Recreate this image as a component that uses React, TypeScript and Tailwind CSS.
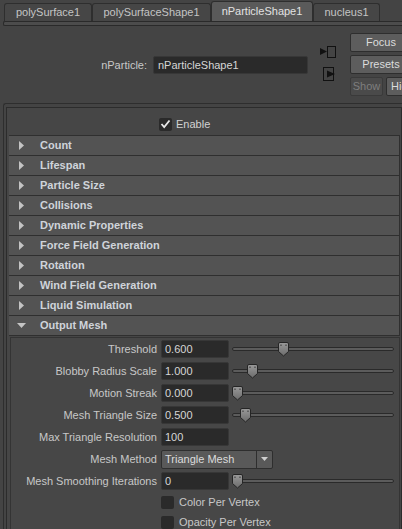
import React from 'react';

const tabs = [
  { label: 'polySurface1', w: 'w-[88px]', active: false },
  { label: 'polySurfaceShape1', w: 'w-[119px]', active: false },
  { label: 'nParticleShape1', w: 'w-[102px]', active: true },
  { label: 'nucleus1', w: 'w-[67px]', active: false },
];

const sections = [
  'Count',
  'Lifespan',
  'Particle Size',
  'Collisions',
  'Dynamic Properties',
  'Force Field Generation',
  'Rotation',
  'Wind Field Generation',
  'Liquid Simulation',
];

const sliderRows = [
  { label: 'Threshold', value: '0.600', pos: 46 },
  { label: 'Blobby Radius Scale', value: '1.000', pos: 15 },
  { label: 'Motion Streak', value: '0.000', pos: 0 },
  { label: 'Mesh Triangle Size', value: '0.500', pos: 8 },
];

function Thumb({ left }: { left: number }) {
  return (
    <svg width="11" height="15" viewBox="0 0 11 15" className="absolute top-0" style={{ left }}>
      <defs>
        <linearGradient id="thumbg" x1="0" y1="0" x2="0" y2="1">
          <stop offset="0" stopColor="#9a9a9a" />
          <stop offset="1" stopColor="#6c6c6c" />
        </linearGradient>
      </defs>
      <path
        d="M2 0.5 H9 Q10.5 0.5 10.5 2 V9.5 L5.5 14 L0.5 9.5 V2 Q0.5 0.5 2 0.5 Z"
        fill="url(#thumbg)"
        stroke="#252525"
      />
      <rect x="2.5" y="2.5" width="1" height="1.5" fill="#333" />
      <rect x="7.5" y="2.5" width="1" height="1.5" fill="#333" />
    </svg>
  );
}

function Slider({ pos }: { pos: number }) {
  return (
    <div className="relative ml-[3px] w-[162px] h-[15px] flex items-center shrink-0">
      <div className="w-full h-[4px] rounded-full border border-[#2a2a2a] bg-[#5c5c5c]" />
      <Thumb left={pos} />
    </div>
  );
}

function Field({ value }: { value: string }) {
  return (
    <div className="w-[68px] h-[18px] shrink-0 flex items-center pl-[3px] rounded-[2px] border border-[#373737] bg-[#2a2a2a] text-[#d6d6d6]">
      {value}
    </div>
  );
}

function Label({ children }: { children: React.ReactNode }) {
  return <div className="w-[150px] pr-[4px] text-right shrink-0">{children}</div>;
}

function Tri({ open }: { open?: boolean }) {
  return open ? (
    <svg width="9" height="6" viewBox="0 0 9 6" className="ml-[8px] mr-[14px]">
      <path d="M0 0 H9 L4.5 5 Z" fill="#c4c4c4" />
    </svg>
  ) : (
    <svg width="6" height="9" viewBox="0 0 6 9" className="ml-[10px] mr-[15px]">
      <path d="M0 0 L5 4.5 L0 9 Z" fill="#c4c4c4" />
    </svg>
  );
}

export default function App() {
  return (
    <div className="w-[402px] h-[529px] overflow-hidden bg-[#444444] text-[11px] leading-none text-[#c8c8c8] font-['Liberation_Sans',Arial,sans-serif] select-none">
      {/* Tabs */}
      <div className="h-[21px] flex items-end pl-[4px]">
        {tabs.map((t) => (
          <div
            key={t.label}
            className={`${t.w} shrink-0 flex items-center justify-center border border-b-0 border-[#2e2e2e] rounded-t-[3px] ${
              t.active ? 'h-[20px] bg-[#5a5a5a] text-[#e2e2e2]' : 'h-[18px] bg-[#464646] text-[#c4c4c4]'
            }`}
          >
            {t.label}
          </div>
        ))}
      </div>
      <div className="ml-[3px] h-[5px] border border-r-0 border-[#2a2a2a] rounded-l-[2px] bg-[#4c4c4c]" />

      {/* Node header */}
      <div className="h-[77px] flex items-start pt-[7px] overflow-hidden">
        <div className="w-[310px] shrink-0 flex items-center justify-end pt-[23px] pr-[2px]">
          <span className="mr-[6px]">nParticle:</span>
          <div className="w-[155px] h-[18px] flex items-center pl-[4px] rounded-[2px] border border-[#373737] bg-[#2a2a2a] text-[#d6d6d6]">
            nParticleShape1
          </div>
        </div>
        <div className="w-[40px] shrink-0 flex flex-col pt-[12px]">
          <svg width="17" height="13" viewBox="0 0 17 13" className="ml-[10px]">
            <rect x="7.5" y="1.5" width="8" height="11" fill="none" stroke="#111" />
            <path d="M0 3 L7 6.5 L0 10 Z" fill="#111" />
          </svg>
          <svg width="18" height="14" viewBox="0 0 18 14" className="ml-[13px] mt-[9px]">
            <rect x="0.5" y="0.5" width="10" height="13" fill="none" stroke="#111" />
            <path d="M4 3.5 L12 7 L4 10.5 Z" fill="#111" />
          </svg>
        </div>
        <div className="flex flex-col gap-[3px] shrink-0">
          <div className="w-[62px] h-[19px] flex items-center justify-center rounded-[2px] border border-[#2e2e2e] bg-[#5d5d5d] text-[#dcdcdc]">
            Focus
          </div>
          <div className="w-[62px] h-[19px] flex items-center justify-center rounded-[2px] border border-[#2e2e2e] bg-[#5d5d5d] text-[#dcdcdc]">
            Presets
          </div>
          <div className="flex gap-[3px]">
            <div className="w-[33px] h-[19px] flex items-center justify-center rounded-[2px] border border-[#3a3a3a] bg-[#4a4a4a] text-[#7e7e7e]">
              Show
            </div>
            <div className="w-[30px] h-[19px] flex items-center pl-[4px] rounded-[2px] border border-[#2e2e2e] bg-[#5d5d5d] text-[#dcdcdc]">
              Hide
            </div>
          </div>
        </div>
      </div>

      {/* Attribute frame */}
      <div className="ml-[3px] h-[426px] border-t border-l border-[#2e2e2e] rounded-tl-[3px] pt-[3px] pl-[2px]">
        <div className="h-full border-t border-l border-r border-[#2c2c2c] bg-[#464646] pr-[1px]">
          <div className="h-[27px] flex items-center pt-[5px] pl-[152px]">
            <div className="w-[13px] h-[13px] rounded-[2px] bg-[#2a2a2a] flex items-center justify-center">
              <svg width="11" height="10" viewBox="0 0 11 10">
                <path d="M1.5 5 L4.2 8 L9.5 1.5" fill="none" stroke="#e8e8e8" strokeWidth="1.8" />
              </svg>
            </div>
            <span className="ml-[4px] text-[#d2d2d2]">Enable</span>
          </div>

          <div className="ml-[2px] border-t border-[#2f2f2f]">
            {sections.map((s) => (
              <div
                key={s}
                className="h-[20px] flex items-center border-b border-r border-[#2f2f2f] bg-[#535353] font-bold text-[#cfd4da]"
              >
                <Tri />
                {s}
              </div>
            ))}
            <div className="h-[20px] flex items-center border-b border-r border-[#2f2f2f] bg-[#535353] font-bold text-[#cfd4da]">
              <Tri open />
              Output Mesh
            </div>

            <div className="mt-[1px] ml-[1px] h-[200px] border border-[#343434] bg-[#474747]">
              {sliderRows.map((r) => (
                <div key={r.label} className="h-[22px] flex items-center">
                  <Label>{r.label}</Label>
                  <Field value={r.value} />
                  <Slider pos={r.pos} />
                </div>
              ))}
              <div className="h-[22px] flex items-center">
                <Label>Max Triangle Resolution</Label>
                <Field value="100" />
              </div>
              <div className="h-[22px] flex items-center">
                <Label>Mesh Method</Label>
                <div className="w-[112px] h-[19px] flex items-center rounded-[2px] border border-[#2e2e2e] bg-[#595959] text-[#dcdcdc]">
                  <span className="flex-1 pl-[3px]">Triangle Mesh</span>
                  <div className="w-[16px] h-full flex items-center justify-center border-l border-[#2e2e2e]">
                    <svg width="7" height="4" viewBox="0 0 7 4">
                      <path d="M0 0 H7 L3.5 4 Z" fill="#cfcfcf" />
                    </svg>
                  </div>
                </div>
              </div>
              <div className="h-[22px] flex items-center">
                <Label>Mesh Smoothing Iterations</Label>
                <Field value="0" />
                <Slider pos={0} />
              </div>
              <div className="h-[20px] flex items-center pl-[150px]">
                <div className="w-[13px] h-[13px] rounded-[2px] bg-[#2a2a2a]" />
                <span className="ml-[5px]">Color Per Vertex</span>
              </div>
              <div className="h-[20px] flex items-center pl-[150px]">
                <div className="w-[13px] h-[13px] rounded-[2px] bg-[#2a2a2a]" />
                <span className="ml-[5px]">Opacity Per Vertex</span>
              </div>
            </div>
          </div>
        </div>
      </div>
    </div>
  );
}
